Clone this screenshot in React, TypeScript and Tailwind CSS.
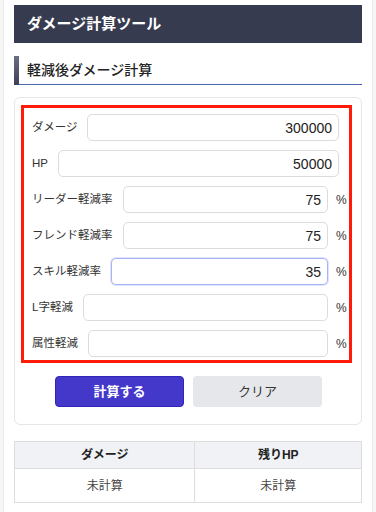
import { useState } from 'react';

type Field = { key: string; label: string; value: string; unit?: boolean; focus?: boolean };

const fields: Field[] = [
  { key: 'damage', label: 'ダメージ', value: '300000' },
  { key: 'hp', label: 'HP', value: '50000' },
  { key: 'leader', label: 'リーダー軽減率', value: '75', unit: true },
  { key: 'friend', label: 'フレンド軽減率', value: '75', unit: true },
  { key: 'skill', label: 'スキル軽減率', value: '35', unit: true, focus: true },
  { key: 'lshape', label: 'L字軽減', value: '', unit: true },
  { key: 'attr', label: '属性軽減', value: '', unit: true },
];

const font = { fontFamily: '"Liberation Sans", "Noto Sans CJK JP", sans-serif' };

export default function App() {
  const [values, setValues] = useState<Record<string, string>>(
    Object.fromEntries(fields.map((f) => [f.key, f.value])),
  );

  return (
    <div className="min-h-screen bg-[#f6f6f6]" style={font}>
      <div className="ml-[3px] w-[370px] min-h-[512px] border-x border-[#ebebeb] bg-white px-[10px] pt-[5px]">
        <div className="flex h-[38px] items-center bg-[#373b4f] pl-[13px] text-[15px] font-bold text-white">
          ダメージ計算ツール
        </div>

        <div className="mt-[13px] flex">
          <div className="w-[5px] bg-gradient-to-b from-[#6b6f82] to-[#3d4158]" />
          <div className="flex h-[29px] flex-1 items-center border-b-[1.5px] border-[#4a66ad] pl-[8px] text-[14px] font-medium text-[#222]">
            軽減後ダメージ計算
          </div>
        </div>

        <div className="mt-[12px] rounded-md border border-[#e6e6e6] bg-white pb-[17px] pl-[6px] pr-[9px] pt-[7px]">
          <div className="flex flex-col gap-[9px] border-[3px] border-[#ff1a0a] pb-[3px] pl-[8px] pr-[3px] pt-[6px]">
            {fields.map((f) => (
              <div key={f.key} className="flex h-[27px] items-center">
                <span className="mr-[10px] whitespace-nowrap text-[11.5px] text-[#333]">{f.label}</span>
                <input
                  value={values[f.key]}
                  onChange={(e) => setValues({ ...values, [f.key]: e.target.value })}
                  className={
                    f.focus
                      ? 'h-full min-w-0 flex-1 rounded-[5px] border-[1.5px] border-[#a9b4f5] bg-white pr-[6px] text-right text-[14px] text-[#222] shadow-[0_0_0_1px_#dfe3fd] outline-none'
                      : 'h-full min-w-0 flex-1 rounded-[5px] border border-[#dcdcdc] bg-white pr-[6px] text-right text-[14px] text-[#222] outline-none'
                  }
                  style={font}
                />
                {f.unit ? (
                  <span className="ml-[8px] w-[10px] text-[12px] text-[#333]">%</span>
                ) : (
                  <span className="w-[7px]" />
                )}
              </div>
            ))}
          </div>

          <div className="mt-[13px] flex justify-center gap-[9px] pl-[4px]">
            <button className="h-[31px] w-[129px] rounded-[4px] border border-[#2f25b8] bg-[#4338ca] text-[13px] font-bold text-white">
              計算する
            </button>
            <button
              onClick={() => setValues(Object.fromEntries(fields.map((f) => [f.key, ''])))}
              className="h-[31px] w-[129px] rounded-[4px] bg-[#e5e7eb] text-[13px] text-[#333]"
            >
              クリア
            </button>
          </div>
        </div>

        <table className="mt-[16px] w-full border-collapse text-[12px]">
          <thead>
            <tr className="h-[27px] bg-[#f0f2f5]">
              <th className="w-[52%] border border-[#dddddd] font-bold text-[#222]">ダメージ</th>
              <th className="border border-[#dddddd] font-bold text-[#222]">残りHP</th>
            </tr>
          </thead>
          <tbody>
            <tr className="h-[34px]">
              <td className="border border-[#dddddd] text-center text-[#444]">未計算</td>
              <td className="border border-[#dddddd] text-center text-[#444]">未計算</td>
            </tr>
          </tbody>
        </table>
      </div>
    </div>
  );
}
